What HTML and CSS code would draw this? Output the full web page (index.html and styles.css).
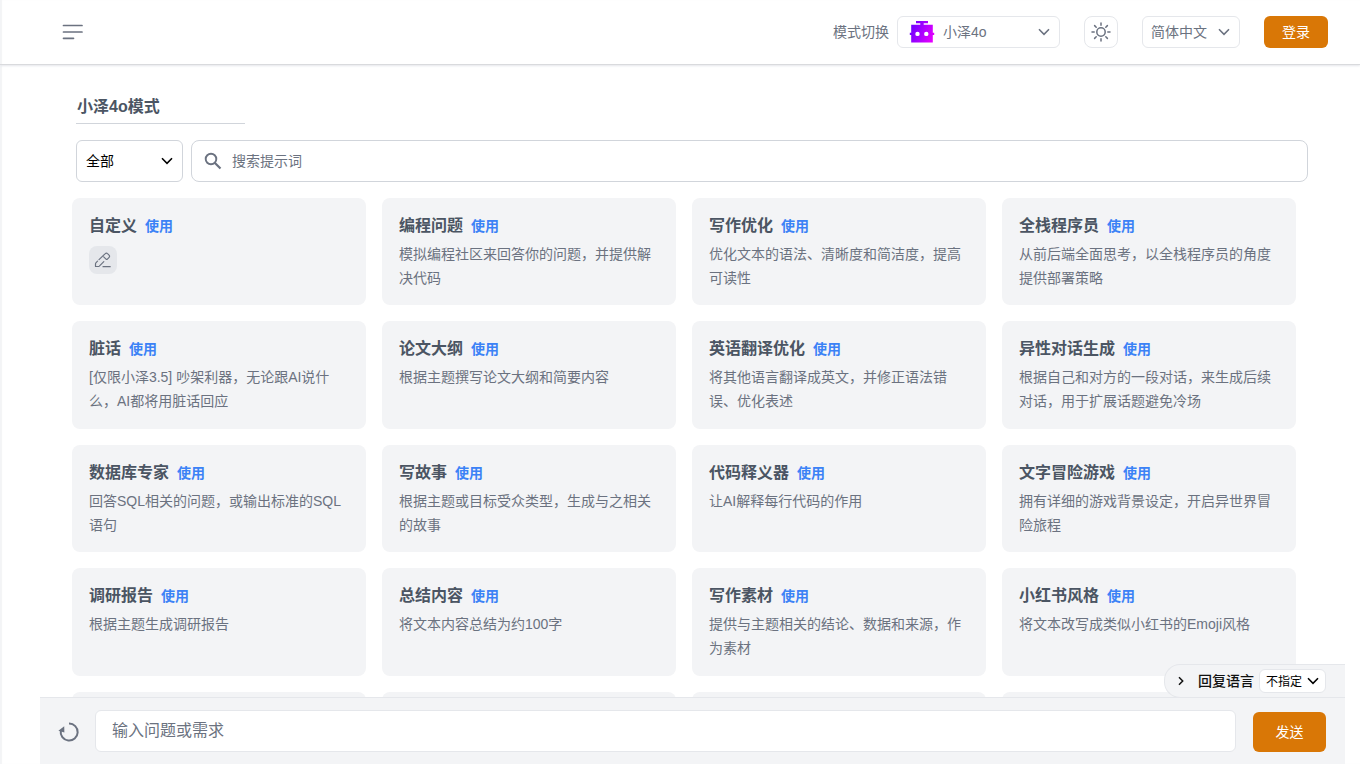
FILE: index.html
```html
<!DOCTYPE html>
<html lang="zh-CN">
<head>
<meta charset="utf-8">
<meta name="viewport" content="width=device-width, initial-scale=1">
<title>小泽4o</title>
<link rel="stylesheet" href="styles.css">
</head>
<body>
<div class="app">
  <header class="topbar">
    <button class="menu-btn" type="button" aria-label="菜单">
      <svg width="22" height="18" viewBox="0 0 22 18"><path d="M1.500 2.500h18.500M1.500 9h18.500M1.500 15.300h10" fill="none" stroke="currentColor" stroke-width="1.700" stroke-linecap="round"/></svg>
    </button>
    <div class="tools">
      <div class="mode">
        <label for="mode">模式切换</label>
        <div class="select-wrap">
          <svg class="robot" width="26" height="24" viewBox="0 0 26 24" aria-hidden="true">
            <defs><linearGradient id="rg" x1="0" y1="0.300" x2="1" y2="0.700"><stop offset="0" stop-color="#6a00ff"/><stop offset="1" stop-color="#e600ff"/></linearGradient></defs>
            <path fill="url(#rg)" fill-rule="evenodd" d="M7 1h12v2.200h-4.300v1.500h9.100v8h1.400v2.400h-1.400v7.400H2.200v-7.400H.8v-2.400h1.400v-8h9.100V3.200H7zM8.500 11.700a2.200 2.200 0 1 0 0 4.400a2.200 2.200 0 1 0 0-4.400zM17.300 11.700a2.200 2.200 0 1 0 0 4.400a2.200 2.200 0 1 0 0-4.400z"/>
          </svg>
          <select id="mode" class="select select-mode"><option>小泽4o</option><option>小泽3.5</option></select>
          <svg class="caret" width="12" height="8" viewBox="0 0 12 8" aria-hidden="true"><path d="M1 1.300l5 5 5-5"/></svg>
        </div>
      </div>
      <button class="theme-btn" type="button" aria-label="切换主题">
        <svg width="20" height="20" viewBox="0 0 20 20" fill="none" stroke="currentColor" stroke-width="1.500" stroke-linecap="round"><circle cx="10" cy="10" r="4.200"/><path d="M10 1v2.200M10 16.800V19M1 10h2.200M16.800 10H19M3.600 3.600l1.600 1.600M14.800 14.800l1.600 1.600M3.600 16.400l1.600-1.600M14.800 5.200l1.600-1.600"/></svg>
      </button>
      <div class="select-wrap">
        <select class="select select-lang" aria-label="界面语言"><option>简体中文</option><option>English</option></select>
        <svg class="caret" width="12" height="8" viewBox="0 0 12 8" aria-hidden="true"><path d="M1 1.300l5 5 5-5"/></svg>
      </div>
      <button class="primary login" type="button">登录</button>
    </div>
  </header>

  <main class="content">
    <h1 class="heading">小泽4o模式</h1>
    <div class="filters">
      <div class="select-wrap">
        <select class="select select-cat" aria-label="分类"><option>全部</option></select>
        <svg class="caret dark" width="12" height="8" viewBox="0 0 12 8" aria-hidden="true"><path d="M1 1.300l5 5 5-5"/></svg>
      </div>
      <div class="search">
        <svg width="18" height="18" viewBox="0 0 18 18" fill="none" stroke="currentColor" aria-hidden="true"><circle cx="7" cy="7" r="5.300" stroke-width="1.900"/><path d="M11 11l5.500 5.500" stroke-width="2.200"/></svg>
        <input type="text" placeholder="搜索提示词" aria-label="搜索提示词">
      </div>
    </div>

    <div class="cards">
      <article class="card"><h2>自定义 <a href="#">使用</a></h2>
        <button class="edit-btn" type="button" aria-label="编辑"><svg width="18" height="18" viewBox="0 0 18 18" fill="none" stroke="currentColor" stroke-width="1.200" stroke-linejoin="round" stroke-linecap="round"><path d="M5 8.600l6.300-6a1.500 1.500 0 0 1 2.200 0l1.600 1.600a1.500 1.500 0 0 1 0 2.200l-1.700 1.700a1 1 0 0 1-1.400 0L9.700 5.800M3.500 10.200l-1.600 1.700a1.500 1.500 0 0 0-.4 1V15.500h2.800a1.500 1.500 0 0 0 1-.4l4.500-4.500M9 15.700h7.200"/></svg></button></article>
      <article class="card"><h2>编程问题 <a href="#">使用</a></h2><p>模拟编程社区来回答你的问题，并提供解决代码</p></article>
      <article class="card"><h2>写作优化 <a href="#">使用</a></h2><p>优化文本的语法、清晰度和简洁度，提高可读性</p></article>
      <article class="card"><h2>全栈程序员 <a href="#">使用</a></h2><p>从前后端全面思考，以全栈程序员的角度提供部署策略</p></article>
      <article class="card"><h2>脏话 <a href="#">使用</a></h2><p>[仅限小泽3.5] 吵架利器，无论跟AI说什么，AI都将用脏话回应</p></article>
      <article class="card"><h2>论文大纲 <a href="#">使用</a></h2><p>根据主题撰写论文大纲和简要内容</p></article>
      <article class="card"><h2>英语翻译优化 <a href="#">使用</a></h2><p>将其他语言翻译成英文，并修正语法错误、优化表述</p></article>
      <article class="card"><h2>异性对话生成 <a href="#">使用</a></h2><p>根据自己和对方的一段对话，来生成后续对话，用于扩展话题避免冷场</p></article>
      <article class="card"><h2>数据库专家 <a href="#">使用</a></h2><p>回答SQL相关的问题，或输出标准的SQL语句</p></article>
      <article class="card"><h2>写故事 <a href="#">使用</a></h2><p>根据主题或目标受众类型，生成与之相关的故事</p></article>
      <article class="card"><h2>代码释义器 <a href="#">使用</a></h2><p>让AI解释每行代码的作用</p></article>
      <article class="card"><h2>文字冒险游戏 <a href="#">使用</a></h2><p>拥有详细的游戏背景设定，开启异世界冒险旅程</p></article>
      <article class="card"><h2>调研报告 <a href="#">使用</a></h2><p>根据主题生成调研报告</p></article>
      <article class="card"><h2>总结内容 <a href="#">使用</a></h2><p>将文本内容总结为约100字</p></article>
      <article class="card"><h2>写作素材 <a href="#">使用</a></h2><p>提供与主题相关的结论、数据和来源，作为素材</p></article>
      <article class="card"><h2>小红书风格 <a href="#">使用</a></h2><p>将文本改写成类似小红书的Emoji风格</p></article>
      <article class="card"></article>
      <article class="card"></article>
      <article class="card"></article>
      <article class="card"></article>
    </div>
  </main>

  <footer class="composer">
    <div class="reply-lang">
      <svg width="8" height="10" viewBox="0 0 8 10" aria-hidden="true"><path d="M2 1.300L5.700 5 2 8.700" fill="none" stroke="currentColor" stroke-width="1.500"/></svg>
      <label for="reply">回复语言</label>
      <div class="select-wrap">
        <select id="reply" class="select select-reply"><option>不指定</option></select>
        <svg class="caret caret-tight dark" width="12" height="8" viewBox="0 0 12 8" aria-hidden="true"><path d="M1 1.300l5 5 5-5"/></svg>
      </div>
    </div>
    <button class="reset-btn" type="button" aria-label="重新开始">
      <svg width="22" height="22" viewBox="0 0 22 22"><path d="M11 2.600a8.500 8.500 0 1 1-8.200 7" fill="none" stroke="currentColor" stroke-width="2"/><path d="M.4 9.700L6.200 5.200 6.400 11.600z" fill="currentColor"/></svg>
    </button>
    <input class="prompt" type="text" placeholder="输入问题或需求" aria-label="输入问题或需求">
    <button class="primary send" type="button">发送</button>
  </footer>
</div>
</body>
</html>
```

FILE: styles.css
```css
* { box-sizing: border-box; }

body {
  margin: 0;
  color: #6b7280;
  background: #fff;
  font: 14px/24px "Liberation Sans", "Noto Sans CJK SC", sans-serif;
}

button, input, select { font: inherit; color: inherit; }
button { padding: 0; border: 0; background: none; cursor: pointer; }
svg { display: block; flex: none; }

.app {
  display: flex;
  flex-direction: column;
  height: 100vh;
  overflow: hidden;
  box-shadow: inset 2px 0 1px #f3f4f6;
}

/* Top bar */
.topbar {
  display: flex;
  flex: none;
  align-items: center;
  justify-content: space-between;
  height: 65px;
  padding: 0 32px 0 62px;
  border-bottom: 1px solid #d9dadd;
  box-shadow: 0 1px 2px #e5e7eb;
}
.tools { display: flex; align-items: center; gap: 24px; }
.mode { display: flex; align-items: center; gap: 8px; }

.select-wrap { position: relative; }
.select {
  display: block;
  appearance: none;
  height: 32px;
  border: 1px solid #e5e7eb;
  border-radius: 6px;
  background: #fff;
}
.select-mode { width: 163px; padding: 0 24px 0 45px; }
.select-lang { width: 98px; padding: 0 24px 0 8px; }
.select-cat {
  width: 107px;
  height: 42px;
  padding: 0 24px 0 9px;
  border-color: #d1d5db;
  color: #000;
}
.select-reply {
  width: 67px;
  height: 24px;
  padding: 0 18px 0 6px;
  color: #000;
  font-size: 12px;
}
.caret {
  position: absolute;
  top: 50%;
  right: 10px;
  margin-top: -4px;
  pointer-events: none;
  fill: none;
  stroke: #6b7280;
  stroke-width: 1.6;
}
.caret.dark { stroke: #000; }
.caret-tight { right: 7px; }
.robot { position: absolute; top: 4px; left: 12px; pointer-events: none; }

.theme-btn {
  display: grid;
  place-items: center;
  width: 34px;
  height: 32px;
  border: 1px solid #e5e7eb;
  border-radius: 8px;
}
.primary {
  border-radius: 6px;
  background: #d97706;
  color: #fff;
}
.login { width: 64px; height: 32px; }

/* Prompt library */
.content {
  flex: 1;
  min-height: 0;
  overflow: hidden;
  padding: 30px 52px 0 76px;
}
.heading {
  width: 169px;
  margin: 0 0 16px;
  padding: 0 1px 4px;
  border-bottom: 1px solid #d1d5db;
  color: #4b5563;
  font-size: 16px;
  line-height: 24px;
}
.filters { display: flex; gap: 8px; margin-bottom: 16px; }
.search {
  display: flex;
  flex: 1;
  align-items: center;
  gap: 10px;
  height: 42px;
  padding: 0 12px;
  border: 1px solid #d1d5db;
  border-radius: 8px;
}
.search input { flex: 1; min-width: 0; padding: 0; border: 0; outline: 0; }
::placeholder { color: #6b7280; opacity: 1; }

.cards {
  display: grid;
  grid-template-columns: repeat(4, 1fr);
  grid-auto-rows: minmax(107px, auto) minmax(108px, auto);
  gap: 16px;
  margin: 0 12px 0 -4px;
}
.card {
  padding: 16px 16px 12px 17px;
  border-radius: 8px;
  background: #f3f4f6;
}
.card h2 {
  display: flex;
  align-items: center;
  gap: 8px;
  margin: 0 0 4px;
  color: #4b5563;
  font-size: 16px;
  line-height: 24px;
}
.card h2 a { color: #3b82f6; font-size: 14px; text-decoration: none; }
.card p { margin: 0; }
.edit-btn {
  display: grid;
  place-items: center;
  width: 28px;
  height: 28px;
  margin-top: 8px;
  border-radius: 8px;
  background: #e5e7eb;
}

/* Message composer */
.composer {
  position: relative;
  display: flex;
  flex: none;
  align-items: flex-end;
  height: 67px;
  margin: 0 15px 0 40px;
  padding: 0 19px 12px 18px;
  border-top: 1px solid #e5e7eb;
  background: #f3f4f6;
}
.reset-btn {
  display: grid;
  place-items: center;
  height: 40px;
  margin-right: 15px;
}
.prompt {
  flex: 1;
  min-width: 0;
  height: 42px;
  margin-right: 17px;
  padding: 0 16px;
  border: 1px solid #e5e7eb;
  border-radius: 6px;
  background: #fff;
  font-size: 16px;
}
.send { width: 73px; height: 40px; }
.reply-lang {
  position: absolute;
  right: 0;
  bottom: 100%;
  display: flex;
  align-items: center;
  height: 34px;
  padding: 0 19px 0 12px;
  border: 1px solid #e5e7eb;
  border-right: 0;
  border-radius: 16px 0 0 16px;
  background: #f3f4f6;
  color: #111;
}
.reply-lang label { margin: 0 5px 0 13px; font-weight: 500; }
```
